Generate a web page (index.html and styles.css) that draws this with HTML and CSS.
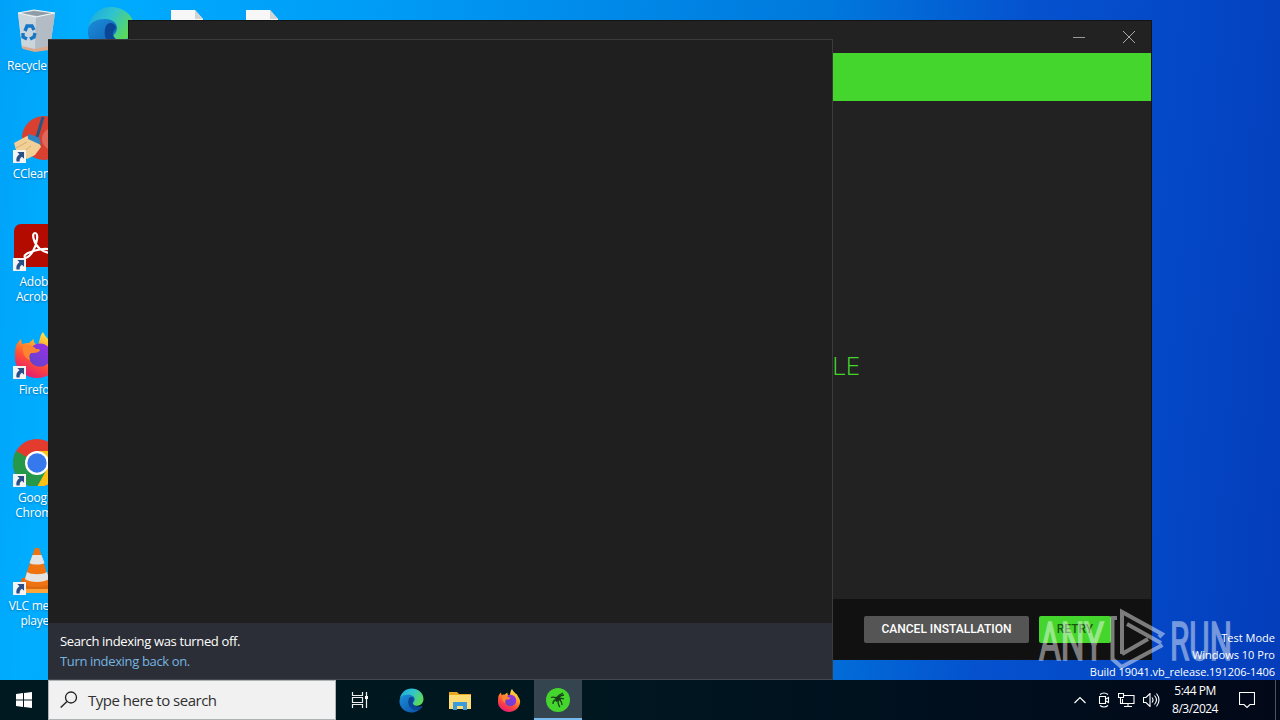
FILE: index.html
```html
<!DOCTYPE html>
<html lang="en">

<head>
  <meta charset="UTF-8">
  <meta name="viewport" content="width=device-width, initial-scale=1.0">
  <title>Desktop</title>
  <link rel="stylesheet" href="styles.css">
</head>

<body>
  <svg class="defs" width="0" height="0">
    <defs>
      <linearGradient id="edge-top" x1="0" y1="0" x2="1" y2=".5">
        <stop offset="0" stop-color="#1aa5e0"/><stop offset=".5" stop-color="#2fc3d0"/><stop offset="1" stop-color="#5bd85c"/>
      </linearGradient>
      <linearGradient id="edge-low" x1="0" y1="0" x2="1" y2="1">
        <stop offset="0" stop-color="#1b8fdb"/><stop offset="1" stop-color="#0b4ea3"/>
      </linearGradient>
      <linearGradient id="fox" x1=".8" y1="0" x2=".3" y2="1">
        <stop offset="0" stop-color="#fff44f"/><stop offset=".35" stop-color="#ffa52b"/><stop offset=".65" stop-color="#ff4f34"/><stop offset="1" stop-color="#e3177a"/>
      </linearGradient>
      <linearGradient id="fox-globe" x1="1" y1="0" x2="0" y2="1">
        <stop offset="0" stop-color="#a12fe8"/><stop offset="1" stop-color="#5a45c8"/>
      </linearGradient>
      <symbol id="edge" viewBox="0 0 48 48">
        <path d="M1 24C2 16 10 11 19 12c8 1 12 6 12 12l-2 8c0 3 5 4 9 4 3 0 6-1 7-1-4 7-12 12-21 12C11 47 0 37 1 24z" fill="url(#edge-low)"/>
        <path d="M1.500 21C4 8 13 1 24 1c13 0 23 9 23 20 0 8-6 13-13 13-5 0-8-2-8-4 0-1 4-3 4-8 0-6-6-9-12-9-8 0-14 3-16.500 8z" fill="url(#edge-top)"/>
        <path d="M19 20c-5 12 5 25 18 22 4-1 7-5 8-7-8 3-17 0-19-6-1-4 3-5 3-8-2-5-8-5-10-1z" fill="#0a4596"/>
      </symbol>
      <symbol id="firefox" viewBox="0 0 48 48">
        <path d="M3 16c1-3 3-5 5-7l1 5c3-1 5-1 7-1 2-2 3-3 5-4-1 3 1 5 4 6 2-5 2-10 5-13 3 6 6 8 10 11l2 4c3 4 5 8 4 13-2 11-11 18-22 18S2 39 2 28c0-4 0-9 1-12z" fill="url(#fox)"/>
        <circle cx="27" cy="25" r="11.500" fill="url(#fox-globe)"/>
        <path d="M10 15c6-1 11 1 13 4 2 0 4 0 4 1-1 3-6 3-9 3-2 2-2 4-1 7-5-1-8-7-7-15z" fill="#ff8430"/>
      </symbol>
      <symbol id="shortcut" viewBox="0 0 12 12">
        <path d="M0 0h12v12H0z" fill="#f4f4f4"/>
        <path d="M4 1.800h6.200V8L8.200 6.200C6.500 7.200 6 8.500 6.200 10.500H3.200C2.600 7.600 3.800 5.400 6 4z" fill="#2a4f88"/>
      </symbol>
      <symbol id="page" viewBox="0 0 48 48">
        <path d="M8 4h24l8 9v32H8z" fill="#f7f7f7"/><path d="M32 4v9h8z" fill="#d3d3d3"/>
      </symbol>
    </defs>
  </svg>

  <div class="desktop">
    <div class="icons">
      <div class="icon">
        <svg class="icon-img" viewBox="0 0 48 48">
          <path d="M5 7l16-3 21 3-5 35-15 3-13-3z" fill="#c3ccd3"/>
          <path d="M5 7l18 4-1 34-13-3z" fill="#cbd5dc"/><path d="M23 11l19-4-5 35-15 3z" fill="#b3bcc5"/>
          <path d="M8 7l13-2 18 2-15 3z" fill="#8e9ca6"/><path d="M5 7l18 4 19-4M5 7l16-3 21 3" fill="none" stroke="#eff3f5" stroke-width="1"/>
          <path d="M9 40l13 3 15-3-1 4-14 2-12-3z" fill="#d8a98d"/>
          <path d="M12 25l2-5h5l2 4M22 27l-1 4-4 2M14 33l-4-2v-4" fill="none" stroke="#1677c5" stroke-width="3.400"/>
        </svg>
        <div class="label">Recycle Bin</div>
      </div>
      <div class="icon">
        <svg class="icon-img" viewBox="0 0 48 48">
          <circle cx="31" cy="24" r="22" fill="#d9402f"/><circle cx="40" cy="25" r="11" fill="#e0685a"/>
          <path d="M14 22l11 4 3 7-6 8-8 4-11-9-2-7z" fill="#f1cf97"/><path d="M3 34l11-6M9 39l9-7" stroke="#d9ae70" stroke-width="1"/>
          <path d="M15 20l11 3 2 8-13-6z" fill="#3186c6"/><path d="M30 3l-6 20" stroke="#245786" stroke-width="3"/>
        </svg>
        <svg class="arrow"><use href="#shortcut"/></svg>
        <div class="label">CCleaner</div>
      </div>
      <div class="icon">
        <svg class="icon-img" viewBox="0 0 48 48">
          <rect x="1" y="2" width="46" height="43" rx="7" fill="#b30b00"/>
          <path d="M12 33c-2 5 4 3 8-4 4-7 6-18 2-18-4 0-1 11 5 16 5 4 12 5 11 2-1-4-14-2-23 2-2 1-3 2-3 3z" fill="none" stroke="#fff" stroke-width="2.200"/>
        </svg>
        <svg class="arrow"><use href="#shortcut"/></svg>
        <div class="label">Adobe<br>Acrobat</div>
      </div>
      <div class="icon">
        <svg class="icon-img"><use href="#firefox"/></svg>
        <svg class="arrow"><use href="#shortcut"/></svg>
        <div class="label">Firefox</div>
      </div>
      <div class="icon">
        <svg class="icon-img" viewBox="0 0 48 48">
          <circle cx="24" cy="25" r="24" fill="#e33b2e"/>
          <path d="M24 25L3.200 13A24 24 0 0 0 24 49l11-18z" fill="#26984a"/>
          <path d="M24 49a24 24 0 0 0 21-36H24l10 18z" fill="#fbc116"/>
          <circle cx="24" cy="25" r="12" fill="#fff"/><circle cx="24" cy="25" r="9.700" fill="#3679ed"/>
        </svg>
        <svg class="arrow"><use href="#shortcut"/></svg>
        <div class="label">Google<br>Chrome</div>
      </div>
      <div class="icon">
        <svg class="icon-img" viewBox="0 0 48 48">
          <path d="M9 32h30l5 15H4z" fill="#dd6a12"/><path d="M5 43h39l1 4H4z" fill="#ffa63a"/>
          <path d="M22 2h4l11 35c-3 5-23 5-27 0z" fill="#ef7411"/>
          <path d="M19.500 9h9l3 8c-3 2-12 2-15 0zM14 26c4 3 16 3 20 0l2 7c-5 4-19 4-24 0z" fill="#e4e4e4"/>
        </svg>
        <svg class="arrow"><use href="#shortcut"/></svg>
        <div class="label">VLC media<br>player</div>
      </div>
      <div class="icon"><svg class="icon-img"><use href="#edge"/></svg></div>
    </div>
    <div class="icons files">
      <svg class="icon-img"><use href="#page"/></svg>
      <svg class="icon-img"><use href="#page"/></svg>
    </div>

    <div class="installer">
      <div class="titlebar">
        <svg width="12" height="12"><path d="M0 6.500h12" stroke="#999"/></svg>
        <svg width="12" height="12"><path d="M0 0l12 12M12 0L0 12" stroke="#a8a8a8"/></svg>
      </div>
      <div class="banner"></div>
      <div class="message">LE</div>
      <div class="actions">
        <button class="btn cancel">CANCEL INSTALLATION</button>
        <button class="btn retry">RETRY</button>
      </div>
    </div>

    <div class="search-panel">
      <div class="notice">
        <div>Search indexing was turned off.</div>
        <div class="link">Turn indexing back on.</div>
      </div>
    </div>

    <svg class="watermark" width="196" height="68" viewBox="1038 607 196 68">
      <text x="1039" y="660" textLength="65" lengthAdjust="spacingAndGlyphs">ANY</text>
      <g fill="none" stroke="#fff" stroke-width="4">
        <path d="M1117 618h-4.500v41l9 8 41-22"/>
        <path d="M1122 654v-42l40 22-3 3M1127 624l34 19M1122 654l26-15"/>
      </g>
      <text x="1170" y="660" textLength="62" lengthAdjust="spacingAndGlyphs">RUN</text>
    </svg>

    <div class="build-info">
      <div>Test Mode</div>
      <div>Windows 10 Pro</div>
      <div class="build">Build 19041.vb_release.191206-1406</div>
    </div>
  </div>

  <div class="taskbar">
    <div class="start">
      <svg width="16" height="16"><path d="M0 2l7-1v6.500H0zM8 .9L16 0v7.500H8zM0 8.500h7V15l-7-1zM8 8.500h8V16l-8-1z" fill="#fff"/></svg>
    </div>
    <div class="search-box">
      <svg width="18" height="18"><circle cx="11" cy="6.500" r="5.500" fill="none" stroke="#222" stroke-width="1.300"/><path d="M7 10.500L.7 16.500" stroke="#222" stroke-width="1.400"/></svg>
      <span>Type here to search</span>
    </div>
    <div class="apps">
      <div class="app task-view">
        <svg width="18" height="16"><path d="M1.500 0v3.500h10V0M1.500 16v-3.500h10V16M1.500 5.500h10v5h-10zM15.500 0v16" fill="none" stroke="#eee" stroke-width="1.200"/><path d="M14 4h3v3h-3z" fill="#fff"/></svg>
      </div>
      <div class="app"><svg width="25" height="25"><use href="#edge"/></svg></div>
      <div class="app">
        <svg width="22" height="19"><path d="M0 1h8l2 2h12v15H0z" fill="#e9a824"/><path d="M0 4h22v14H0z" fill="#ffdb73"/><path d="M4 11h14v8h-4v-4H8v4H4z" fill="#3c9bdb"/></svg>
      </div>
      <div class="app"><svg width="24" height="24"><use href="#firefox"/></svg></div>
      <div class="app active">
        <svg width="24" height="24">
          <circle cx="12" cy="12" r="12" fill="#44d62c"/>
          <path d="M5 9.500c3-1 4 0 6 1M11 10c1-2 3-4 6-5M13 9c2-2 3-2 5-2M13 11c2-1 3-1 5 0M14 12c1 1 2 2 2 5M12 12c0 3 0 5 2 7M10 12c-2 0-3 2-3 4" fill="none" stroke="#183e1c" stroke-width="1.300"/>
          <path d="M9 9l5-1 1 4-5 2z" fill="#183e1c"/>
        </svg>
      </div>
    </div>
    <div class="tray">
      <svg width="12" height="8"><path d="M.5 7L6 1.500 11.500 7" fill="none" stroke="#fff" stroke-width="1.200"/></svg>
      <svg width="12" height="16"><path d="M1.500 4.500h6v7h-6zM8 7l2.500-1.500v5L8 9M2 2.500q4-3 8 0M2 13.500q4 3 8 0" fill="none" stroke="#fff" stroke-width="1.100"/></svg>
      <svg width="17" height="14"><path d="M6 2.500h10v8H4.500V6M10 10.500v3M6 13.500h8M.5.500h5v4h-5zM2.500 4.500v6h2" fill="none" stroke="#fff" stroke-width="1.100"/></svg>
      <svg width="17" height="14"><path d="M.5 4.500h2.500l4-4v13l-4-4H.5zM9 4.500q2 2.500 0 5M11.500 2.500q4 4.500 0 9M13.500.5q5 6.500 0 13" fill="none" stroke="#fff" stroke-width="1.100"/></svg>
    </div>
    <div class="clock">
      <div>5:44 PM</div>
      <div>8/3/2024</div>
    </div>
    <svg class="action-center" width="16" height="16"><path d="M.5.500h15v12H11l-3 3-3-3H.5z" fill="none" stroke="#fff" stroke-width="1.100"/></svg>
    <div class="show-desktop"></div>
  </div>
</body>

</html>
```
FILE: styles.css
```css
* {
  box-sizing: border-box;
}

body {
  display: flex;
  flex-direction: column;
  width: 1280px;
  height: 720px;
  margin: 0;
  overflow: hidden;
  font-family: "Open Sans", "Noto Sans", sans-serif;
}

svg {
  display: block;
  flex: none;
}

.defs {
  position: absolute;
}

.desktop {
  position: relative;
  height: 680px;
  overflow: hidden;
  background: linear-gradient(95deg, #00a2f8 0%, #00adff 6%, #009cf5 28%, #0078dc 62%, #0552cf 77%, #0447c6 90%, #043dba 100%);
}

.icons {
  display: flex;
  flex-flow: column wrap;
  width: 150px;
  height: 680px;
  align-content: flex-start;
}

.icon {
  position: relative;
  display: flex;
  flex-direction: column;
  align-items: center;
  width: 74px;
  height: 108px;
  padding-top: 6px;
}

.icon-img {
  width: 48px;
  height: 48px;
}

.arrow {
  position: absolute;
  left: 13px;
  top: 42px;
  width: 13px;
  height: 13px;
}

.label {
  margin-top: 4px;
  color: #fff;
  font-size: 12px;
  line-height: 15px;
  letter-spacing: -0.25px;
  text-align: center;
  white-space: nowrap;
  text-shadow: 0 1px 2px rgba(0, 30, 70, 0.4);
}

.files {
  position: absolute;
  left: 163px;
  top: 6px;
  flex-direction: row;
  gap: 27px;
  height: 48px;
}

/* installer window */
.installer {
  position: absolute;
  left: 128px;
  top: 20px;
  display: flex;
  flex-direction: column;
  width: 1024px;
  height: 640px;
  border: 1px solid #141414;
  background: #222;
}

.titlebar {
  display: flex;
  justify-content: flex-end;
  align-items: center;
  gap: 38px;
  height: 32px;
  padding-right: 16px;
}

.banner {
  height: 48px;
  background: #44d62c;
}

.message {
  flex: 1;
  padding: 243px 0 0 703px;
  color: #44d62c;
  font: 300 26.5px/42px "Open Sans", sans-serif;
}

.actions {
  display: flex;
  justify-content: flex-end;
  gap: 10px;
  height: 60px;
  padding: 17px 40px 0 0;
  background: #111;
}

.btn {
  height: 27px;
  padding: 0 0 1px;
  border: 0;
  border-radius: 2px;
  font: 500 12px Roboto, sans-serif;
}

.cancel {
  width: 165px;
  background: #555;
  color: #fff;
}

.retry {
  width: 72px;
  background: #44d62c;
  color: #17580f;
}

/* search flyout */
.search-panel {
  position: absolute;
  left: 48px;
  top: 39px;
  display: flex;
  flex-direction: column;
  justify-content: flex-end;
  width: 785px;
  height: 641px;
  border: 1px solid #3b3b3b;
  border-width: 1px 1px 0 0;
  background: #1f1f1f;
}

.notice {
  height: 57px;
  padding: 8px 12px;
  border-bottom: 1px solid #43484c;
  background: #2b2e36;
  color: #fff;
  font-size: 13px;
  line-height: 20px;
  letter-spacing: -0.35px;
}

.link {
  color: #76b5e0;
}

.build-info {
  position: absolute;
  right: 5px;
  bottom: 0;
  color: #fff;
  font-size: 11px;
  line-height: 17px;
  text-align: right;
}

.build {
  letter-spacing: -0.05px;
}

.watermark {
  position: absolute;
  left: 1038px;
  top: 607px;
  overflow: visible;
  opacity: 0.45;
}

.watermark text {
  fill: #fff;
  stroke: #fff;
  stroke-width: 1.6px;
  font: 400 54px Roboto, sans-serif;
}

.taskbar {
  display: flex;
  height: 40px;
  background: linear-gradient(90deg, #001820 0%, #001720 45%, #000f1e 75%, #020818 100%);
  color: #fff;
}

.start,
.app {
  display: flex;
  justify-content: center;
  align-items: center;
  width: 48px;
}

.search-box {
  display: flex;
  align-items: center;
  gap: 10px;
  width: 288px;
  padding-left: 11px;
  border: 1px solid #aeb4b6;
  background: #f1f1f1;
  color: #303030;
  font-size: 15px;
  letter-spacing: -0.5px;
}

.apps {
  display: flex;
  gap: 1px;
}

.task-view {
  margin-right: 2px;
}

.active {
  border-bottom: 2px solid #76b9ed;
  background: #354550;
}

.active svg {
  margin-top: 2px;
}

.tray {
  display: flex;
  align-items: center;
  gap: 8px;
  margin-left: auto;
}

.tray svg:first-child {
  margin-right: 4px;
}

.clock {
  width: 70px;
  padding-top: 2px;
  font-size: 12px;
  line-height: 18px;
  letter-spacing: -0.5px;
  text-align: center;
}

.action-center {
  align-self: center;
  margin: 0 20px 0 9px;
}

.show-desktop {
  width: 5px;
  border-left: 1px solid #4b535e;
}
```
